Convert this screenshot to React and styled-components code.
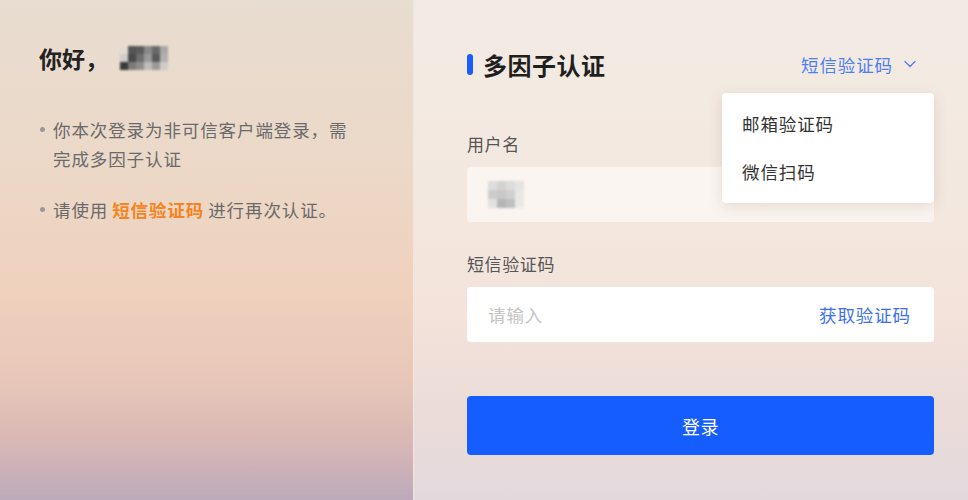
import React from "react";
import styled, { createGlobalStyle } from "styled-components";
import { ChevronDown } from "lucide-react";

const Global = createGlobalStyle`
  html, body { margin: 0; padding: 0; }
  body { font-family: "Noto Sans CJK SC", "Noto Sans", sans-serif; }
  * { box-sizing: border-box; }
`;

const Page = styled.div`
  width: 968px;
  height: 500px;
  display: flex;
  overflow: hidden;
`;

const Left = styled.div`
  width: 413px;
  flex: none;
  padding: 43px 56px 0 39px;
  background: linear-gradient(180deg, #e8ddd1 0%, #ecd8c7 35%, #efd1bd 58%, #e8c7ba 76%, #d9b8b5 88%, #bcaaba 100%);
`;

const Greeting = styled.h1`
  margin: 0;
  display: flex;
  align-items: center;
  font-size: 23px;
  line-height: 30px;
  font-weight: 700;
  color: #222;
`;

const Mosaic = styled.span`
  display: inline-grid;
  grid-template-columns: repeat(${(p) => p.$cols}, ${(p) => p.$cell}px);
  grid-auto-rows: ${(p) => p.$cell}px;
  filter: blur(1.2px);
  margin-left: ${(p) => p.$ml || 0}px;
`;

const Cell = styled.span`
  background: ${(p) => p.$c};
`;

const Bullets = styled.ul`
  margin: 42px 0 0;
  padding: 0;
  list-style: none;
  display: flex;
  flex-direction: column;
  gap: 22px;
`;

const Bullet = styled.li`
  position: relative;
  padding-left: 14px;
  font-size: 17.5px;
  line-height: 29px;
  letter-spacing: 0.9px;
  color: #6a6a6a;
  &::before {
    content: "";
    position: absolute;
    left: 1px;
    top: 12px;
    width: 5px;
    height: 5px;
    border-radius: 50%;
    background: #9a9a9a;
  }
`;

const Hl = styled.span`
  color: #f7831e;
  font-weight: 700;
  margin: 0 4px;
`;

const Right = styled.div`
  flex: 1;
  padding: 48px 34px 0 53px;
  border-left: 1px solid #f3e4dc;
  background: linear-gradient(180deg, #f2ebe3 0%, #f3e8df 40%, #f4e3da 62%, #ecdcd9 82%, #e3d9dd 100%);
`;

const Header = styled.div`
  position: relative;
  height: 32px;
  display: flex;
  align-items: center;
  justify-content: space-between;
`;

const Title = styled.h2`
  margin: 0;
  display: flex;
  align-items: center;
  gap: 10px;
  font-size: 24px;
  font-weight: 700;
  color: #1f1f1f;
  letter-spacing: 0.5px;
  &::before {
    content: "";
    width: 6px;
    height: 21px;
    border-radius: 3px;
    background: #1a5cff;
  }
`;

const Trigger = styled.div`
  display: flex;
  align-items: center;
  gap: 7px;
  margin-right: 14px;
  font-size: 17.5px;
  letter-spacing: 0.9px;
  color: #4d7ff2;
`;

const Menu = styled.div`
  position: absolute;
  right: 0;
  top: 45px;
  width: 212px;
  padding: 14px 0;
  background: #fff;
  border-radius: 4px;
  box-shadow: 0 4px 14px rgba(120, 90, 70, 0.16);
  z-index: 2;
  display: flex;
  flex-direction: column;
  gap: 14px;
`;

const MenuItem = styled.div`
  padding-left: 20px;
  font-size: 17.5px;
  line-height: 34px;
  letter-spacing: 0.9px;
  color: #333;
`;

const Label = styled.div`
  font-size: 17px;
  line-height: 24px;
  letter-spacing: 0.6px;
  color: #555;
  margin-top: ${(p) => p.$mt}px;
`;

const Field = styled.div`
  margin-top: 11px;
  height: 55px;
  border-radius: 4px;
  display: flex;
  align-items: center;
  justify-content: space-between;
  padding: 0 23px 0 21px;
  background: ${(p) => (p.$muted ? "rgba(255,255,255,0.55)" : "#ffffff")};
`;

const Placeholder = styled.span`
  font-size: 17.5px;
  letter-spacing: 0.9px;
  color: #c4c4c4;
`;

const Action = styled.span`
  font-size: 17.5px;
  letter-spacing: 0.9px;
  color: #3d70ee;
`;

const Submit = styled.button`
  margin-top: 54px;
  width: 100%;
  height: 59px;
  border: none;
  border-radius: 4px;
  background: #165dff;
  color: #fff;
  font-family: inherit;
  font-size: 18px;
  letter-spacing: 0.5px;
`;

const nameCells = [
  "#e2dbd3", "#555", "#5c5c5c", "#8a8a8a", "#6a6a6a", "#a8a8a8",
  "#d0ccc8", "#4a4a4a", "#6e6e6e", "#9a9a9a", "#5a5a5a", "#b0b0b0",
  "#3a3a3a", "#7a7a7a", "#8e8e8e", "#bdbdbd", "#9a9a9a", "#cfcbc7",
];
const userCells = [
  "#ddd", "#d2d2d2", "#dcdcdc", "#e6e4e2",
  "#ccc", "#c8c8c8", "#d0d0d0", "#e9e7e5",
  "#e4e2e0", "#b5b5b5", "#c0c0c0", "#ebe9e7",
];

export default function App() {
  return (
    <>
      <Global />
      <Page>
        <Left>
          <Greeting>
            你好，
            <Mosaic $cols={6} $cell={8} $ml={12}>
              {nameCells.map((c, i) => (
                <Cell key={i} $c={c} />
              ))}
            </Mosaic>
          </Greeting>
          <Bullets>
            <Bullet>你本次登录为非可信客户端登录，需完成多因子认证</Bullet>
            <Bullet>
              请使用<Hl>短信验证码</Hl>进行再次认证。
            </Bullet>
          </Bullets>
        </Left>
        <Right>
          <Header>
            <Title>多因子认证</Title>
            <Trigger>
              短信验证码
              <ChevronDown size={20} strokeWidth={1.5} />
            </Trigger>
            <Menu>
              <MenuItem>邮箱验证码</MenuItem>
              <MenuItem>微信扫码</MenuItem>
            </Menu>
          </Header>
          <Label $mt={52}>用户名</Label>
          <Field $muted>
            <Mosaic $cols={4} $cell={9}>
              {userCells.map((c, i) => (
                <Cell key={i} $c={c} />
              ))}
            </Mosaic>
          </Field>
          <Label $mt={30}>短信验证码</Label>
          <Field>
            <Placeholder>请输入</Placeholder>
            <Action>获取验证码</Action>
          </Field>
          <Submit>登录</Submit>
        </Right>
      </Page>
    </>
  );
}
